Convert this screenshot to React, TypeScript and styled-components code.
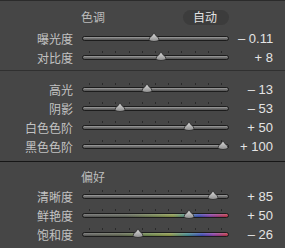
import styled, { createGlobalStyle } from "styled-components";

const GlobalStyle = createGlobalStyle`
    html, body {
        margin: 0;
        padding: 0;
        background: #464646;
    }
`;

const Panel = styled.div`
    width: 285px;
    height: 248px;
    overflow: hidden;
    background: #464646;
    border-top: 1px solid #2b2b2b;
    box-sizing: border-box;
    font-family: "Noto Sans CJK SC", "Noto Sans", sans-serif;
    color: #c2c2c2;
    font-size: 12px;
`;

const Section = styled.div<{ $top: number; $bottom: number }>`
    padding: ${(p) => p.$top}px 12px ${(p) => p.$bottom}px 0;
`;

const Divider = styled.div<{ $dark?: boolean }>`
    height: 1px;
    background: ${(p) => (p.$dark ? "#161616" : "#303030")};
`;

const Row = styled.div<{ $h?: number }>`
    display: grid;
    grid-template-columns: 73px 147px 1fr;
    column-gap: 9px;
    align-items: center;
    height: ${(p) => p.$h ?? 19}px;
`;

const Label = styled.div`
    text-align: right;
    white-space: nowrap;
    line-height: 1;
`;

const HeaderCell = styled.div`
    grid-column: 2;
    display: flex;
    align-items: center;
    justify-content: space-between;
`;

const Title = styled.span`
    margin-left: -1px;
    color: #bcbcbc;
    line-height: 1;
`;

const AutoButton = styled.div`
    width: 46px;
    height: 15px;
    border-radius: 8px;
    background: #3c3c3c;
    color: #e2e2e2;
    display: flex;
    align-items: center;
    justify-content: center;
    line-height: 1;
    padding-right: 2px;
    box-sizing: border-box;
`;

const SliderCell = styled.div`
    height: 19px;
    display: flex;
    flex-direction: column;
    justify-content: center;
    padding-bottom: 4px;
    box-sizing: border-box;
`;

const Ticks = styled.div<{ $hidden?: boolean }>`
    display: flex;
    justify-content: space-between;
    padding: 0 7px 0 7px;
    height: 2px;
    margin-bottom: 2px;
    visibility: ${(p) => (p.$hidden ? "hidden" : "visible")};
`;

const Tick = styled.span`
    width: 1px;
    height: 2px;
    background: #2a2a2a;
`;

const Track = styled.div<{ $color?: string }>`
    position: relative;
    height: 5px;
    border-radius: 3px;
    box-sizing: border-box;
    border: 1px solid #1c1c1c;
    background: ${(p) =>
        p.$color
            ? `linear-gradient(to bottom, rgba(255,255,255,0.25), rgba(0,0,0,0.15)), ${p.$color}`
            : "linear-gradient(to bottom, #a2a2a2 0%, #6c6c6c 55%, #555555 100%)"};
`;

const Thumb = styled.svg`
    position: absolute;
    top: -5px;
    width: 11px;
    height: 10px;
    transform: translateX(-50%);
`;

const Value = styled.div`
    text-align: right;
    font-family: "Liberation Sans Narrow", "Liberation Sans", Arial, sans-serif;
    font-size: 13px;
    color: #e4e4e4;
    white-space: nowrap;
    line-height: 1;
`;

const VIVID =
    "linear-gradient(to right, #5e5e5e 0%, #5f6458 30%, #75864e 50%, #8c9a48 62%, #3f8a8e 72%, #3a48b8 80%, #8a3aa8 88%, #c43040 100%)";
const SAT =
    "linear-gradient(to right, #5e5e5e 0%, #606650 25%, #6e8a4a 45%, #8e9a46 60%, #3f8a8e 72%, #3a48b8 82%, #8a3aa8 90%, #c43040 100%)";

type SliderProps = {
    label: string;
    value: number;
    min: number;
    max: number;
    text: string;
    noTicks?: boolean;
    color?: string;
};

const Slider = ({ label, value, min, max, text, noTicks, color }: SliderProps) => {
    const left = 6 + ((value - min) / (max - min)) * 135;
    return (
        <Row>
            <Label>{label}</Label>
            <SliderCell>
                <Ticks $hidden={noTicks}>
                    {Array.from({ length: 11 }).map((_, i) => (
                        <Tick key={i} />
                    ))}
                </Ticks>
                <Track $color={color}>
                    <Thumb viewBox="0 0 11 10" style={{ left: left - 1 }}>
                        <defs>
                            <linearGradient id="tg" x1="0" y1="0" x2="0" y2="1">
                                <stop offset="0" stopColor="#e0e0e0" />
                                <stop offset="1" stopColor="#8c8c8c" />
                            </linearGradient>
                        </defs>
                        <path
                            d="M5.5 0.6 L7.2 3.4 Q10.5 5.2 10.4 7.6 Q10 9.5 5.5 9.5 Q1 9.5 0.6 7.6 Q0.5 5.2 3.8 3.4 Z"
                            fill="url(#tg)"
                            stroke="#2a2a2a"
                            strokeWidth="0.8"
                        />
                    </Thumb>
                </Track>
            </SliderCell>
            <Value>{text}</Value>
        </Row>
    );
};

export default function App() {
    return (
        <>
            <GlobalStyle />
            <Panel>
                <Section $top={4} $bottom={3}>
                    <Row $h={24}>
                        <HeaderCell>
                            <Title>色调</Title>
                            <AutoButton>自动</AutoButton>
                        </HeaderCell>
                    </Row>
                    <Slider label="曝光度" value={-0.11} min={-5} max={5} text="– 0.11" noTicks />
                    <Slider label="对比度" value={8} min={-100} max={100} text="+ 8" />
                </Section>
                <Divider />
                <Section $top={9} $bottom={5}>
                    <Slider label="高光" value={-13} min={-100} max={100} text="– 13" />
                    <Slider label="阴影" value={-53} min={-100} max={100} text="– 53" />
                    <Slider label="白色色阶" value={50} min={-100} max={100} text="+ 50" />
                    <Slider label="黑色色阶" value={100} min={-100} max={100} text="+ 100" />
                </Section>
                <Divider $dark />
                <Section $top={5} $bottom={0}>
                    <Row $h={20}>
                        <HeaderCell>
                            <Title>偏好</Title>
                        </HeaderCell>
                    </Row>
                    <Slider label="清晰度" value={85} min={-100} max={100} text="+ 85" />
                    <Slider label="鲜艳度" value={50} min={-100} max={100} text="+ 50" color={VIVID} />
                    <Slider label="饱和度" value={-26} min={-100} max={100} text="– 26" color={SAT} />
                </Section>
            </Panel>
        </>
    );
}
